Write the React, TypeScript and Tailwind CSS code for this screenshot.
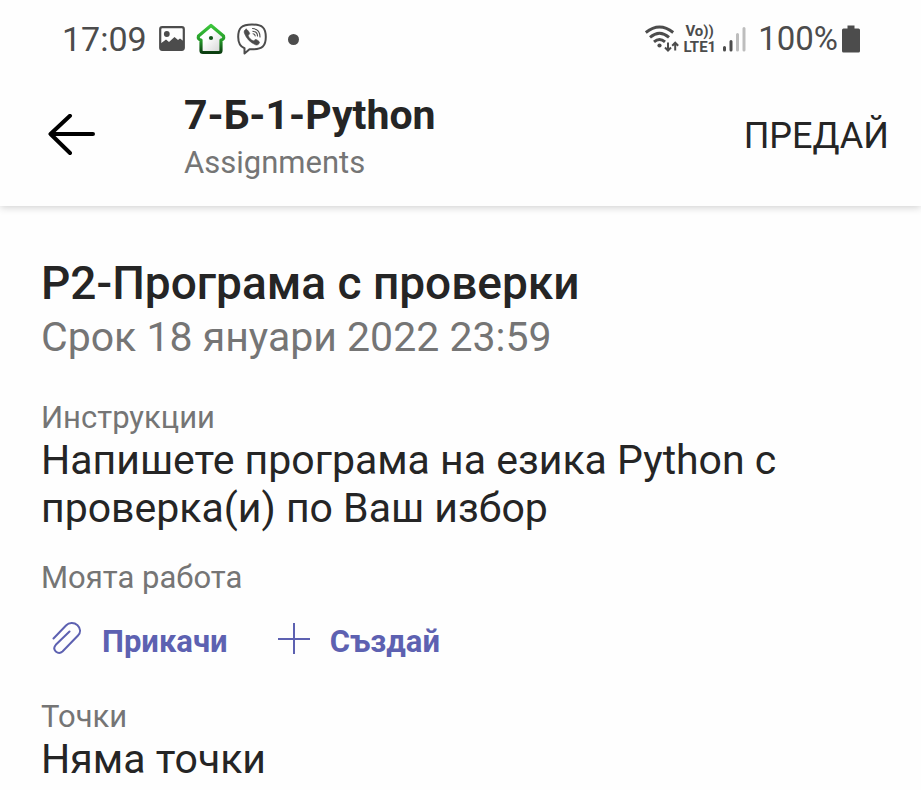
import type { ReactNode } from 'react';

function PictureIcon() {
  return (
    <svg className="h-[26px] w-[26px]" viewBox="0 0 26 26" aria-hidden="true">
      <rect x="1.2" y="1.2" width="23.6" height="22.6" rx="2" fill="none" stroke="#4c4c4c" strokeWidth="2.2" />
      <circle cx="7.8" cy="8" r="2.9" fill="#4c4c4c" />
      <path d="M1 18L7 13.5L10 16L15.5 11L19 14L21 12.5L25 15.5V24H1z" fill="#4c4c4c" />
    </svg>
  );
}

function HouseIcon() {
  return (
    <svg className="h-[32px] w-[30px]" viewBox="0 0 30 32" aria-hidden="true">
      <defs>
        <linearGradient id="house-edge" x1="0" y1="0" x2="0" y2="1">
          <stop offset="0" stopColor="#3cc63c" />
          <stop offset="0.55" stopColor="#259a29" />
          <stop offset="1" stopColor="#0b3d10" />
        </linearGradient>
        <linearGradient id="house-wall" x1="0" y1="0" x2="1" y2="1">
          <stop offset="0.4" stopColor="#ffffff" />
          <stop offset="1" stopColor="#cfcfcf" />
        </linearGradient>
      </defs>
      <path
        d="M15 2.5L27.5 13Q28.5 16.5 25 17V27.5Q25 29.5 23 29.5H7Q5 29.5 5 27.5V17Q1.5 16.5 2.5 13Z"
        fill="url(#house-wall)"
        stroke="url(#house-edge)"
        strokeWidth="3.2"
        strokeLinejoin="round"
      />
      <circle cx="15" cy="15" r="2.1" fill="#14541a" />
    </svg>
  );
}

function ViberIcon() {
  return (
    <svg className="h-[32px] w-[30px]" viewBox="0 0 30 32" fill="none" stroke="#4c4c4c" strokeLinecap="round" aria-hidden="true">
      <path d="M15 1.5C4.5 1.5 1.2 5 1.2 14C1.2 20 3 23.5 7.5 25.2V30.5L12.5 26.3H15C25.5 26.3 28.8 23 28.8 14S25.5 1.5 15 1.5Z" strokeWidth="2" strokeLinejoin="round" />
      <path d="M9.2 6.2C7.2 7 6.7 8.5 7.5 10.5C9.5 15.5 13 19.5 18.5 21.8C20.5 22.5 21.8 21.5 22.5 19.5C22.7 18.5 19.5 16.3 18.5 16.5C17.5 16.7 17.3 18 16.3 17.8C14 17 12 15 11.3 12.7C11.2 11.8 12.6 11.5 12.7 10.5C12.6 9.5 10.3 6.2 9.2 6.2Z" fill="#4c4c4c" strokeWidth="0.6" />
      <path d="M15.5 5.5Q23 6 23 14M15.8 8.2Q20.5 8.8 20.5 13M16 10.8Q18 11 18.2 13" strokeWidth="1.1" />
    </svg>
  );
}

function WifiIcon() {
  return (
    <svg className="h-[28px] w-[34px]" viewBox="0 0 34 28" fill="none" stroke="#4c4c4c" strokeWidth="2.9" aria-hidden="true">
      <path d="M0.8 7.5Q14.5-3.5 28.2 7.5M5 12.3Q14.5 4 24 12.3M9 16.8Q14.5 12 20 16.8" />
      <circle cx="14.5" cy="20.5" r="2.1" fill="#4c4c4c" stroke="none" />
      <path d="M23 17.5V25.5M20 22.5L23 25.5L26 22.5M30.2 25.5V17.5M27.2 20.7L30.2 17.7L33.2 20.7" strokeWidth="2" />
    </svg>
  );
}

function SignalIcon() {
  return (
    <svg className="h-[26px] w-[24px]" viewBox="0 0 24 26" strokeWidth="3" strokeLinecap="round" aria-hidden="true">
      <path d="M2.5 21.5V24M9 15.5V24" stroke="#4c4c4c" />
      <path d="M15.5 8.5V24M22 2.5V24" stroke="#bdbdbd" />
    </svg>
  );
}

function BatteryIcon() {
  return (
    <svg className="h-[28px] w-[18px]" viewBox="0 0 18 28" fill="#4c4c4c" aria-hidden="true">
      <path d="M5.5 0.5H12.5V3.5H16.5Q18 3.5 18 5V26Q18 27.5 16.5 27.5H1.5Q0 27.5 0 26V5Q0 3.5 1.5 3.5H5.5Z" />
    </svg>
  );
}

function BackIcon() {
  return (
    <svg className="h-[44px] w-[48px]" viewBox="0 0 48 44" fill="none" stroke="#000" strokeWidth="4" strokeLinecap="round" strokeLinejoin="round" aria-hidden="true">
      <path d="M22 1.8L2.5 20L22 39M2.5 20H45" />
    </svg>
  );
}

function ClipIcon() {
  return (
    <svg className="h-8 w-[30px]" viewBox="0 0 30 32" fill="none" stroke="#5d61b1" strokeWidth="2" strokeLinecap="round" aria-hidden="true">
      <path d="M1.5 16.5L14 3.5C17 0.5 22 0.2 25.5 3.2C28.8 6.5 28.8 10.5 26 13.5L10.5 29.5C8.5 31.3 6 31.3 3.8 29.5C1.8 27.5 1.8 25 3.8 22.8L17.5 9.5" />
    </svg>
  );
}

function PlusIcon() {
  return (
    <svg className="h-8 w-8" viewBox="0 0 32 32" fill="none" stroke="#5d61b1" strokeWidth="2" aria-hidden="true">
      <path d="M16 1V32M0 17H32" />
    </svg>
  );
}

function Section({ label, children }: { label: string; children: ReactNode }) {
  return (
    <section>
      <h3 className="text-[31px] leading-9 text-[#757575]">{label}</h3>
      {children}
    </section>
  );
}

function StatusBar() {
  return (
    <div className="flex h-20 items-center justify-between pr-[61px] pb-0.5 pl-[62px] text-[34px] text-[#4c4c4c]">
      <div className="flex items-center">
        <span className="mr-3">17:09</span>
        <div className="flex items-center gap-[11px]">
          <PictureIcon />
          <HouseIcon />
          <ViberIcon />
        </div>
        <span className="ml-[21px] size-[11px] rounded-full bg-[#4c4c4c]" />
      </div>
      <div className="flex items-center">
        <WifiIcon />
        <div className="mr-1.5 ml-1 flex flex-col text-[15px] leading-4 font-bold">
          <span className="pl-0.5">Vo))</span>
          <span>LTE1</span>
        </div>
        <SignalIcon />
        <span className="mr-1 ml-3 text-[33px]">100%</span>
        <BatteryIcon />
      </div>
    </div>
  );
}

export default function App() {
  return (
    <div className="min-h-screen bg-[#fefefe] font-[Roboto,sans-serif] text-[#252525]">
      <header className="bg-[#fefefe] shadow-[0_1px_8px_rgba(0,0,0,0.2)]">
        <StatusBar />
        <div className="flex items-center pt-[11px] pr-8 pb-[25px] pl-12">
          <button type="button" aria-label="Back">
            <BackIcon />
          </button>
          <div className="ml-[88px] flex-1">
            <h1 className="text-[41px] leading-[48px] font-bold">7-Б-1-Python</h1>
            <p className="mt-1.5 text-[31px] leading-9 text-[#757575]">Assignments</p>
          </div>
          <button type="button" className="text-[36px] leading-[48px]">ПРЕДАЙ</button>
        </div>
      </header>

      <main className="px-[41px] pt-[49px]">
        <h2 className="text-[46px] leading-[56px] font-medium">Р2-Програма с проверки</h2>
        <p className="mt-0.5 text-[41px] leading-[48px] text-[#757575]">Срок 18 януари 2022 23:59</p>

        <div className="mt-[39px]">
          <Section label="Инструкции">
            <p className="max-w-[780px] text-[41px] leading-[48px]">
              Напишете програма на езика Python с проверка(и) по Ваш избор
            </p>
          </Section>
        </div>

        <div className="mt-7">
          <Section label="Моята работа">
            <div className="mt-[26px] flex pl-[11px] text-[31px] leading-10 font-bold text-[#5d61b1]">
              <button type="button" className="flex items-start gap-5">
                <ClipIcon />
                Прикачи
              </button>
              <button type="button" className="ml-[50px] flex items-start gap-5">
                <PlusIcon />
                Създай
              </button>
            </div>
          </Section>
        </div>

        <div className="mt-[37px]">
          <Section label="Точки">
            <p className="text-[41px] leading-[48px]">Няма точки</p>
          </Section>
        </div>
      </main>
    </div>
  );
}
